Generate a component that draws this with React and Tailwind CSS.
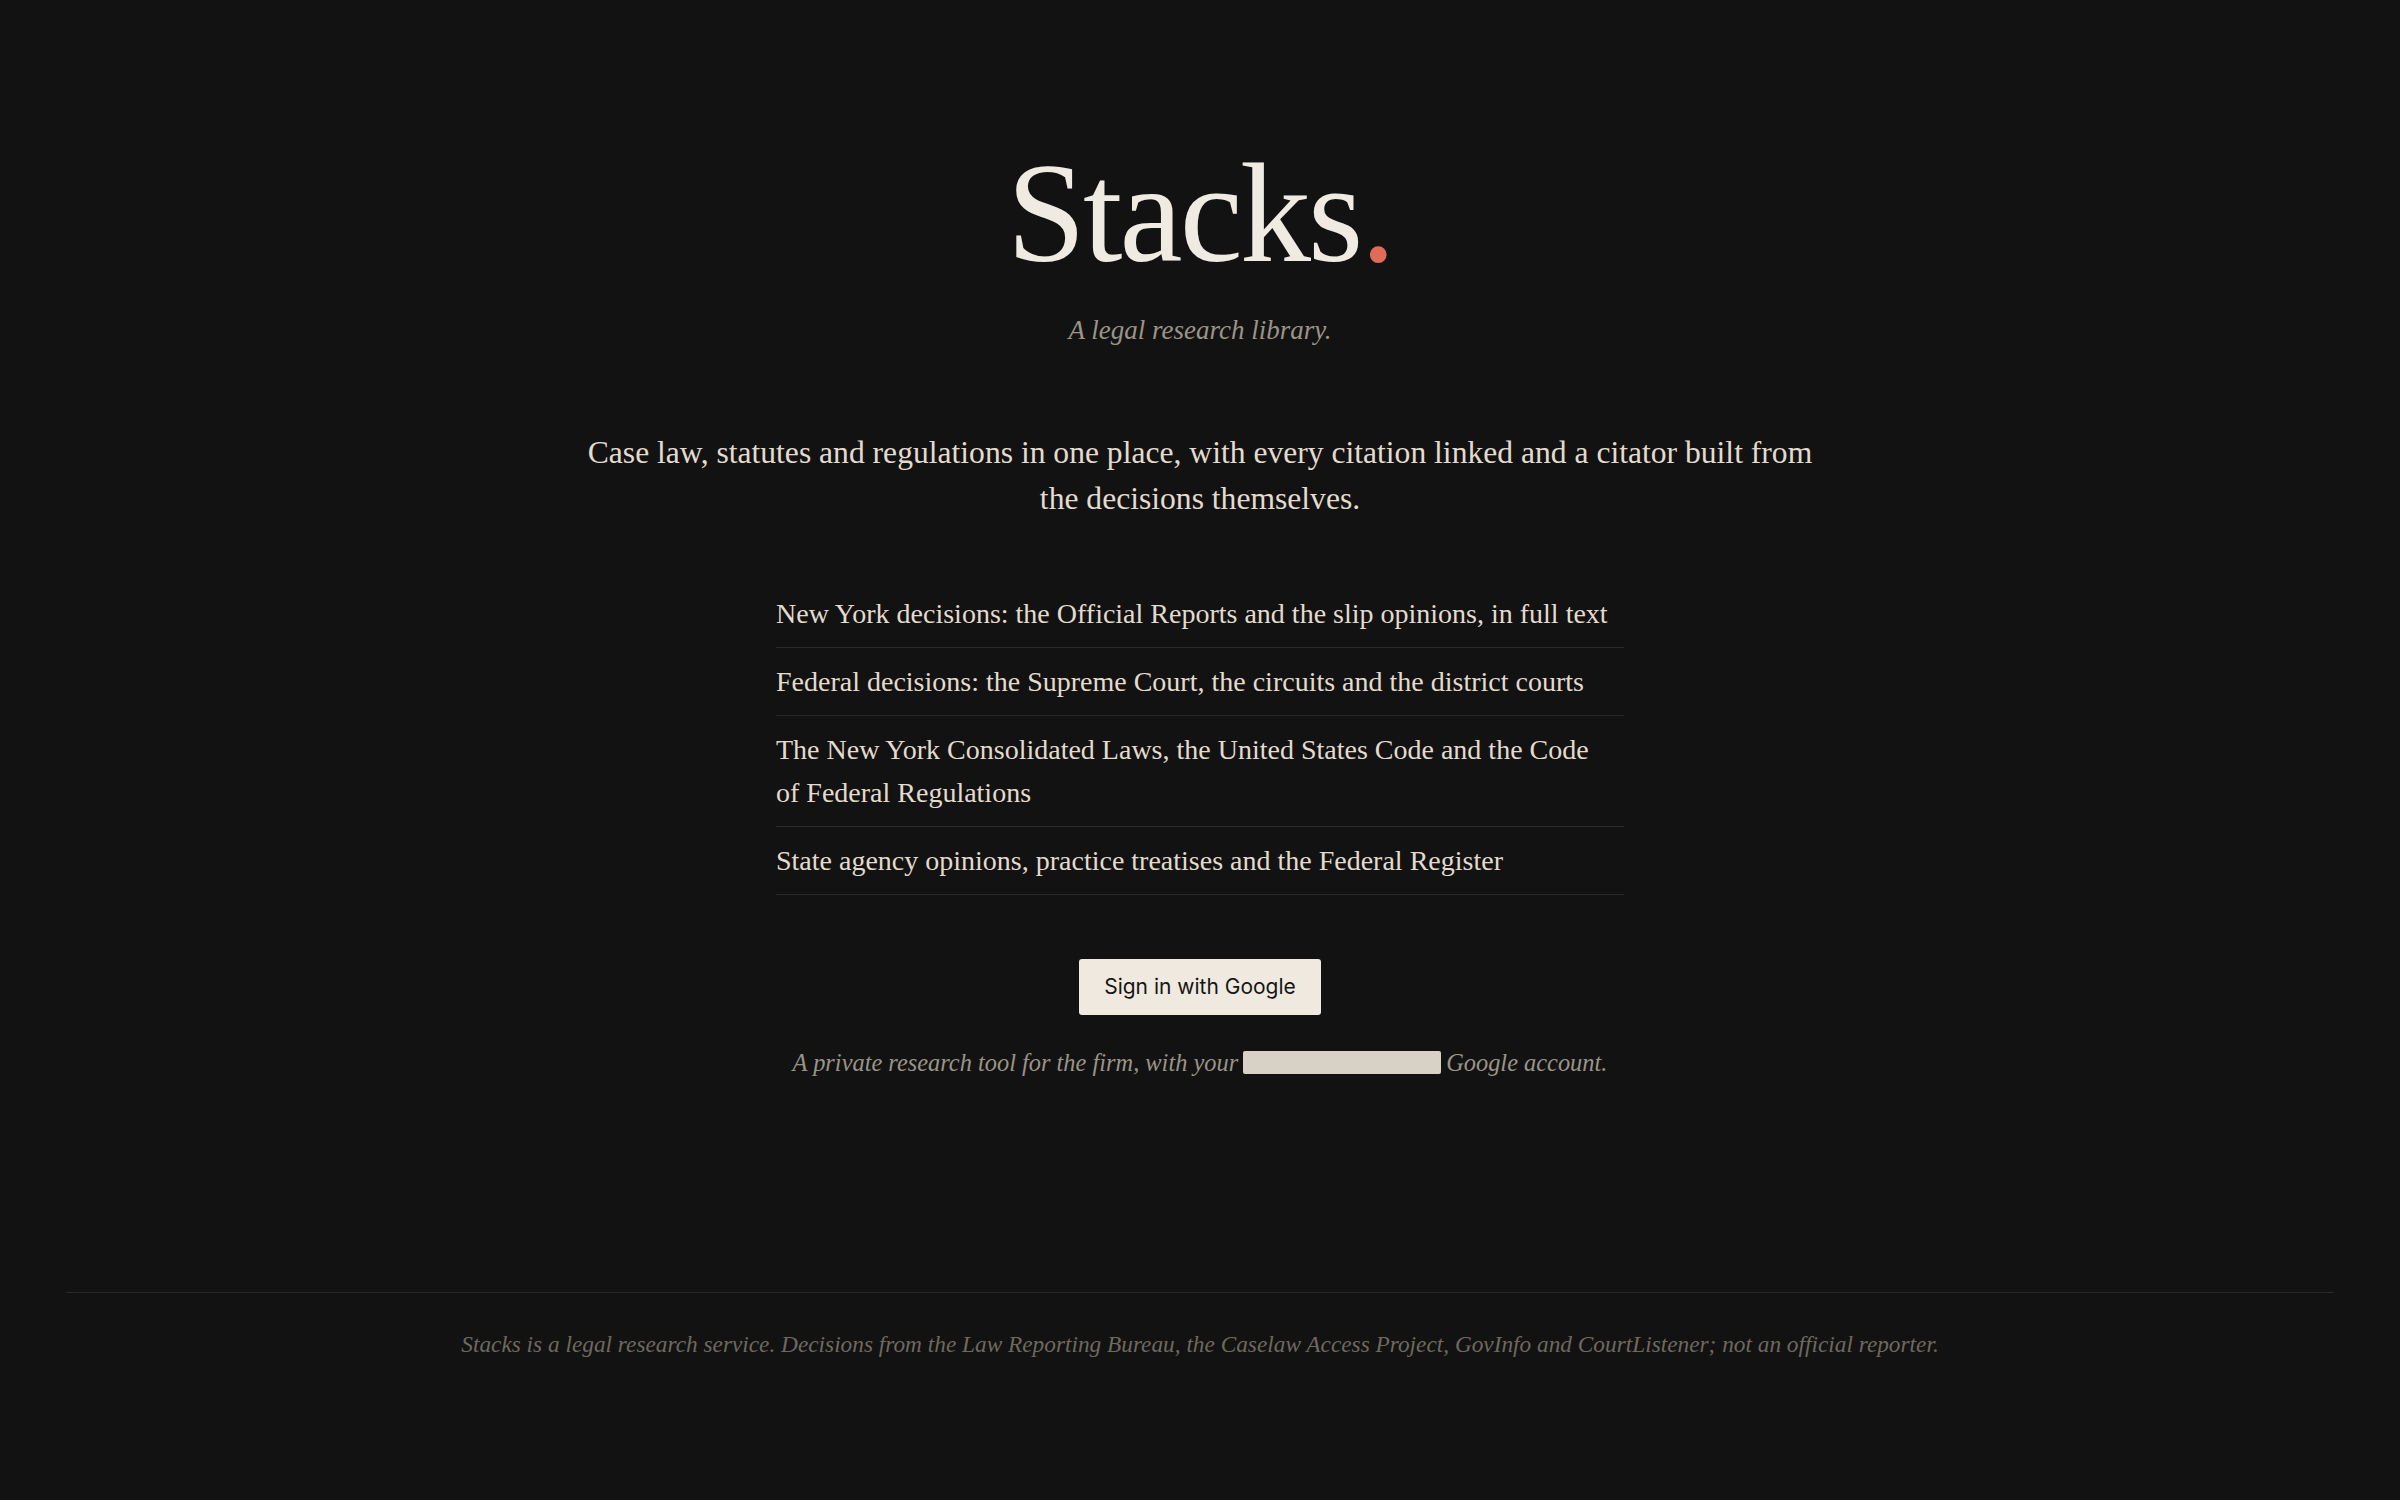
import React from "react";

const serif = { fontFamily: '"Liberation Serif", "DejaVu Serif", serif' };

const coverage = [
    "New York decisions: the Official Reports and the slip opinions, in full text",
    "Federal decisions: the Supreme Court, the circuits and the district courts",
    "The New York Consolidated Laws, the United States Code and the Code of Federal Regulations",
    "State agency opinions, practice treatises and the Federal Register",
];

const App = () => {
    return (
        <div className="min-h-screen bg-[#121212] text-[#ece6da] flex flex-col" style={serif}>
            <main className="flex flex-col items-center pt-[142px]">
                <h1 className="text-[142px] leading-none tracking-[-0.02em] text-[#efebe3]">
                    Stacks<span className="text-[#e06b58]">.</span>
                </h1>
                <p className="mt-[26px] text-[27px] italic text-[#9a9488]">A legal research library.</p>

                <p className="mt-[79px] w-[1240px] text-center text-[31.6px] leading-[46px] text-[#e2dbce]">
                    Case law, statutes and regulations in one place, with every citation linked and a citator built from the decisions themselves.
                </p>

                <ul className="mt-[58px] w-[848px]">
                    {coverage.map((item) => (
                        <li key={item} className="border-b border-[#2a2a2a] py-[12px] pr-[10px] text-[28px] leading-[43px] text-[#e2dbce]">
                            {item}
                        </li>
                    ))}
                </ul>

                <button
                    className="mt-[64px] h-[56px] px-[25px] rounded-[3px] bg-[#efe9df] text-[#161616] text-[21px]"
                    style={{ fontFamily: 'Inter, "Liberation Sans", sans-serif' }}
                >
                    Sign in with Google
                </button>

                <p className="mt-[30px] text-[24.4px] italic text-[#9a9488] flex items-center">
                    A private research tool for the firm, with your
                    <span className="mx-[5px] inline-block w-[198px] h-[23px] rounded-[2px] bg-[#d8d1c5]" />
                    Google account.
                </p>
            </main>

            <footer className="mx-[66px] mt-[211px] border-t border-[#2a2a2a] pt-[34px] pb-[120px] text-center">
                <p className="text-[23.3px] italic text-[#6d6960]">
                    Stacks is a legal research service. Decisions from the Law Reporting Bureau, the Caselaw Access Project, GovInfo and CourtListener; not an official reporter.
                </p>
            </footer>
        </div>
    );
};

export default App;
